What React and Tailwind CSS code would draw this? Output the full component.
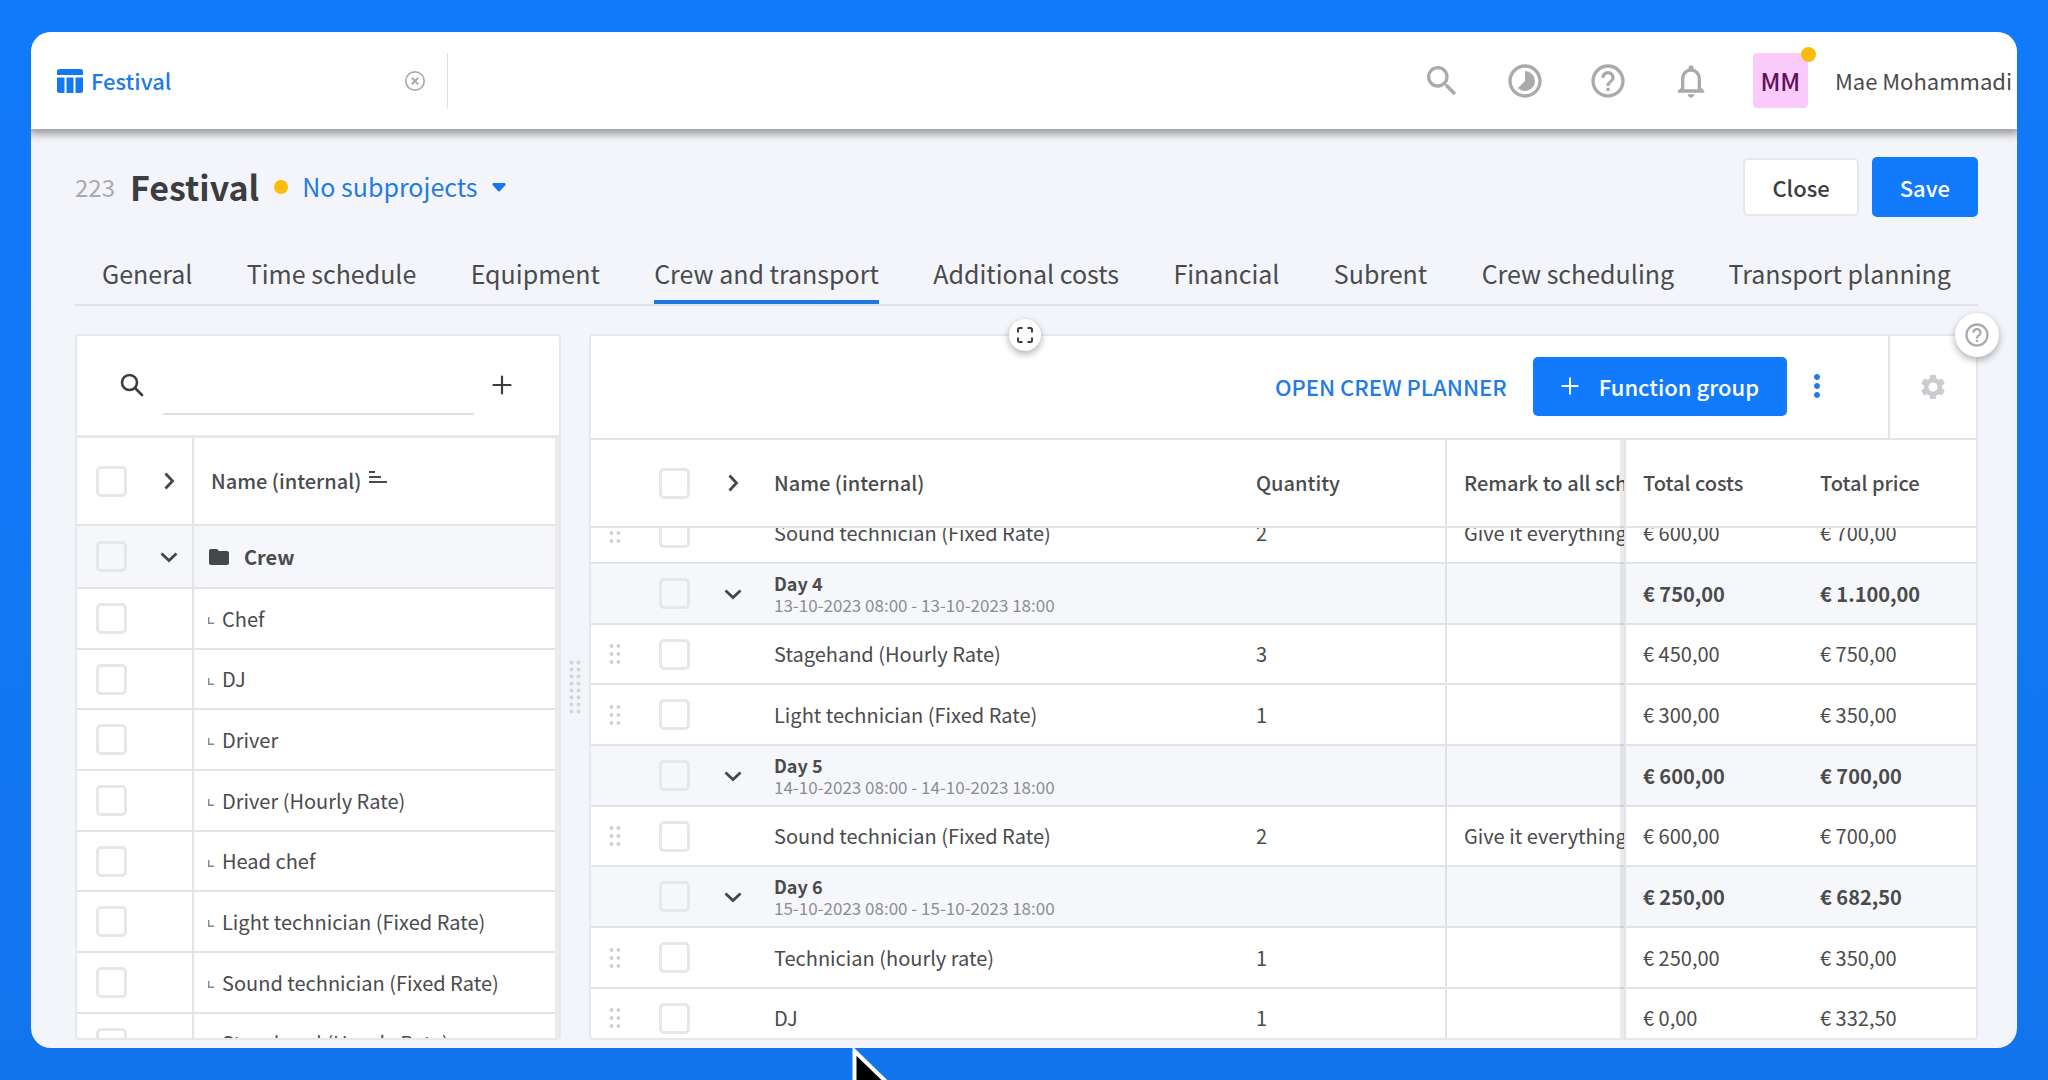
import { useLayoutEffect, useRef } from "react";
import {
  MdSearch,
  MdOutlineTimelapse,
  MdHelpOutline,
  MdNotificationsNone,
  MdSettings,
  MdFolder,
  MdMoreVert,
} from "react-icons/md";

const tabs = [
  "General",
  "Time schedule",
  "Equipment",
  "Crew and transport",
  "Additional costs",
  "Financial",
  "Subrent",
  "Crew scheduling",
  "Transport planning",
];

const functions = [
  "Chef",
  "DJ",
  "Driver",
  "Driver (Hourly Rate)",
  "Head chef",
  "Light technician (Fixed Rate)",
  "Sound technician (Fixed Rate)",
  "Stagehand (Hourly Rate)",
];

const rows = [
  { name: "Sound technician (Fixed Rate)", qty: 2, remark: "Give it everything", costs: "€ 600,00", price: "€ 700,00" },
  { group: true, name: "Day 4", period: "13-10-2023 08:00 - 13-10-2023 18:00", costs: "€ 750,00", price: "€ 1.100,00" },
  { name: "Stagehand (Hourly Rate)", qty: 3, costs: "€ 450,00", price: "€ 750,00" },
  { name: "Light technician (Fixed Rate)", qty: 1, costs: "€ 300,00", price: "€ 350,00" },
  { group: true, name: "Day 5", period: "14-10-2023 08:00 - 14-10-2023 18:00", costs: "€ 600,00", price: "€ 700,00" },
  { name: "Sound technician (Fixed Rate)", qty: 2, remark: "Give it everything", costs: "€ 600,00", price: "€ 700,00" },
  { group: true, name: "Day 6", period: "15-10-2023 08:00 - 15-10-2023 18:00", costs: "€ 250,00", price: "€ 682,50" },
  { name: "Technician (hourly rate)", qty: 1, costs: "€ 250,00", price: "€ 350,00" },
  { name: "DJ", qty: 1, costs: "€ 0,00", price: "€ 332,50" },
];

function Checkbox({ label }) {
  return (
    <input
      type="checkbox"
      aria-label={label}
      className="mx-auto block size-[31px] appearance-none rounded-[5px] border-[3px] border-[#e6e7e9]"
    />
  );
}

function Chevron({ down, label }) {
  return (
    <button type="button" aria-label={label} className="mx-auto block text-[#44484c]">
      <svg viewBox="0 0 24 24" className={down ? "size-6 rotate-90" : "size-6"} fill="none" stroke="currentColor" strokeWidth="2.8">
        <path d="M8.5 4.5 15.5 12 8.5 19.5" />
      </svg>
    </button>
  );
}

function Plus({ className }) {
  return (
    <svg viewBox="0 0 20 20" className={className} fill="none" stroke="currentColor" strokeWidth="2.2" strokeLinecap="round">
      <path d="M10 1.5v17M1.5 10h17" />
    </svg>
  );
}

function Dots({ count, className, step }) {
  return (
    <svg viewBox={`0 0 12 ${count * step}`} className={className} fill="currentColor">
      {Array.from({ length: count }, (_, i) => (
        <g key={i}>
          <circle cx="2.5" cy={step / 2 + i * step} r="2" />
          <circle cx="9.5" cy={step / 2 + i * step} r="2" />
        </g>
      ))}
    </svg>
  );
}

function TopBar() {
  return (
    <header className="relative z-10 flex h-[97px] shrink-0 items-center bg-white pl-[26px] pr-[5px] shadow-[0_3px_8px_2px_rgba(0,0,0,0.38)]">
      <a href="#festival" className="flex items-center gap-2 text-[22px] font-medium text-[#1f7be6]">
        <svg viewBox="0 0 26 24" className="h-6 w-[26px]" fill="#1478f2">
          <path d="M2.5 0h21A2.5 2.5 0 0 1 26 2.500V6H0V2.500A2.500 2.500 0 0 1 2.500 0Z" />
          <path d="M0 8.500h7.500V24H2.500A2.500 2.500 0 0 1 0 21.500Z" />
          <path d="M9.500 8.500h7V24h-7Z" />
          <path d="M18.500 8.500H26v13A2.500 2.500 0 0 1 23.500 24h-5Z" />
        </svg>
        Festival
      </a>
      <button type="button" aria-label="Close tab" className="ml-[233px] text-[#a9abad]">
        <svg viewBox="0 0 22 22" className="size-[22px]" fill="none" stroke="currentColor" strokeWidth="2">
          <circle cx="11" cy="11" r="9.200" strokeWidth="1.700" />
          <path d="m7.800 7.800 6.400 6.400M14.200 7.800l-6.400 6.400" />
        </svg>
      </button>
      <div className="ml-[21px] h-14 w-px bg-[#dfe0e2]" />
      <nav className="ml-auto flex items-center gap-[43px] text-[#a8aaac]">
        <button type="button" aria-label="Search"><MdSearch className="size-10" /></button>
        <button type="button" aria-label="Time"><MdOutlineTimelapse className="size-10" /></button>
        <button type="button" aria-label="Help"><MdHelpOutline className="size-10" /></button>
        <button type="button" aria-label="Notifications"><MdNotificationsNone className="size-10" /></button>
      </nav>
      <div className="relative ml-[42px] flex size-[55px] items-center justify-center rounded bg-[#fbcbfb] text-[24px] font-medium text-[#5f1058]">
        MM
        <span className="absolute -right-2 -top-[6px] size-[15px] rounded-full bg-[#fbbc0c]" />
      </div>
      <span className="ml-[27px] whitespace-nowrap pb-px text-[22px] text-[#4a4b4d]">Mae Mohammadi</span>
    </header>
  );
}

function TitleRow() {
  return (
    <div className="flex h-[60px] items-center">
      <span className="text-[24px] text-[#a8aaac]">223</span>
      <h1 className="ml-[15px] pb-px text-[34px] font-bold text-[#3c3d40]">Festival</h1>
      <span className="ml-[15px] size-[14px] rounded-full bg-[#fbbc0c]" />
      <button type="button" className="ml-[14px] flex items-center gap-[14px] text-[25px] text-[#1f7be6]">
        No subprojects
        <svg viewBox="0 0 14 9" className="h-[9px] w-[14px]" fill="#1478f2">
          <path d="M1.500 0h11Q14.500.500 13 2.500L8.500 7.500Q7 9.500 5.500 7.500L1 2.500Q-.500.500 1.500 0Z" />
        </svg>
      </button>
      <button type="button" className="ml-auto h-[58px] rounded-[5px] border-2 border-[#e6e8ec] bg-white px-[27px] text-[22px] font-medium text-[#3c3d40]">
        Close
      </button>
      <button type="button" className="ml-[13px] h-[60px] rounded-[5px] bg-[#127afd] px-7 text-[22px] font-medium text-white">
        Save
      </button>
    </div>
  );
}

function Tabs() {
  return (
    <nav className="mt-[29px] flex h-[60px] justify-between border-b-2 border-[#e1e3e7] px-[27px]">
      {tabs.map((tab) => (
        <a
          key={tab}
          href="#tab"
          className={
            tab === "Crew and transport"
              ? "flex items-center whitespace-nowrap border-b-4 border-[#1f78dc] pt-px text-[25px] text-[#4a4b4d]"
              : "flex items-center whitespace-nowrap border-b-4 border-transparent pt-px text-[25px] text-[#4a4b4d]"
          }
        >
          {tab}
        </a>
      ))}
    </nav>
  );
}

function FunctionPanel() {
  return (
    <aside className="flex w-[486px] shrink-0 flex-col overflow-hidden rounded border-2 border-[#e6e8ec] bg-white">
      <div className="flex h-[102px] shrink-0 items-center border-b-[3px] border-[#e6e7e9] pb-px pl-[43px] pr-[47px]">
        <label htmlFor="function-search" className="text-[#3c3d40]">
          <svg viewBox="0 0 24 24" className="size-6" fill="none" stroke="currentColor" strokeWidth="2.600" strokeLinecap="round">
            <circle cx="9.500" cy="9.500" r="7.500" />
            <path d="m15 15 7 7" />
          </svg>
        </label>
        <input
          id="function-search"
          type="text"
          className="ml-[19px] mt-3 h-12 min-w-0 flex-1 border-b-2 border-[#dfe0e2] text-[20px] outline-none"
        />
        <button type="button" aria-label="Add" className="ml-[18px] text-[#3c3d40]">
          <Plus className="size-5" />
        </button>
      </div>
      <div className="min-h-0 flex-1 overflow-hidden">
        <table className="w-full table-fixed border-separate border-spacing-0 border-r-4 border-[#ebebed] text-[20px] text-[#4a4b4d]">
          <colgroup>
            <col className="w-[68px]" />
            <col className="w-[49px]" />
            <col />
          </colgroup>
          <thead>
            <tr className="h-[88px] *:border-b-2 *:border-[#e3e4e7]">
              <th><Checkbox label="Select all functions" /></th>
              <th className="border-r-2"><Chevron label="Expand all functions" /></th>
              <th className="pl-[17px] text-left font-medium">
                <span className="flex items-center gap-2">
                  Name (internal)
                  <svg viewBox="0 0 18 14" className="mb-2 h-[14px] w-[18px]" fill="none" stroke="currentColor" strokeWidth="2">
                    <path d="M0 2h6M0 7h12M0 12h18" />
                  </svg>
                </span>
              </th>
            </tr>
          </thead>
          <tbody>
            <tr className="h-[63px] bg-[#f6f7fa] *:border-b-2 *:border-[#e3e4e7]">
              <td><Checkbox label="Select Crew" /></td>
              <td className="border-r-2"><Chevron down label="Collapse Crew" /></td>
              <td className="pl-[13px] font-bold">
                <span className="flex items-center gap-[13px]">
                  <MdFolder className="size-6 text-[#44484c]" />
                  Crew
                </span>
              </td>
            </tr>
            {functions.map((name) => (
              <tr key={name} className="h-[61px] *:border-b-2 *:border-[#e3e4e7] [&:nth-child(3n)]:h-[60px]">
                <td><Checkbox label={`Select ${name}`} /></td>
                <td className="border-r-2" />
                <td className="whitespace-nowrap pl-[14px]">
                  <span className="flex items-center gap-2">
                    <svg viewBox="0 0 6 7" className="mt-1 h-[7px] w-[6px]" fill="none" stroke="#85888b" strokeWidth="1.400">
                      <path d="M.700 0v6.300H6" />
                    </svg>
                    {name}
                  </span>
                </td>
              </tr>
            ))}
          </tbody>
        </table>
      </div>
    </aside>
  );
}

const frozen = "relative border-l-2 border-l-[#d9dadc] pl-[17px] shadow-[-4px_0_0_rgba(0,0,0,0.08)]";

function PlanningTable() {
  const scroller = useRef(null);
  useLayoutEffect(() => {
    scroller.current.scrollTop = 25;
  }, []);

  return (
    <div ref={scroller} className="min-h-0 flex-1 overflow-x-hidden overflow-y-auto [scrollbar-width:none]">
      <table className="w-full table-fixed border-separate border-spacing-0 text-[20px] text-[#4a4b4d]">
        <colgroup>
          <col className="w-[48px]" />
          <col className="w-[70px]" />
          <col className="w-[48px]" />
          <col />
          <col className="w-[209px]" />
          <col className="w-[177px]" />
          <col className="w-[178px]" />
          <col className="w-[174px]" />
        </colgroup>
        <thead className="sticky top-0 z-10 bg-white">
          <tr className="h-[88px] text-left *:border-b-2 *:border-[#e3e4e7] *:font-medium">
            <th />
            <th><Checkbox label="Select all rows" /></th>
            <th><Chevron label="Expand all rows" /></th>
            <th className="pl-[17px]">Name (internal)</th>
            <th className="border-r-2 pl-[18px]">Quantity</th>
            <th className="overflow-hidden whitespace-nowrap pl-[17px]">Remark to all sch</th>
            <th className={frozen}>Total costs</th>
            <th className="pl-[18px]">Total price</th>
          </tr>
        </thead>
        <tbody>
          {rows.map((row, i) => (
            <tr
              key={i}
              className={
                row.group
                  ? "h-[61px] bg-[#f6f7fa] *:border-b-2 *:border-[#e0e2e7] [&:nth-child(3n)]:h-[60px]"
                  : "h-[61px] *:border-b-2 *:border-[#e3e4e7] [&:nth-child(3n)]:h-[60px]"
              }
            >
              <td className="text-[#cfd1d4]">
                {!row.group && <Dots count={3} step={8} className="mx-auto h-6 w-3" />}
              </td>
              <td><Checkbox label={`Select ${row.name}`} /></td>
              <td>{row.group && <Chevron down label={`Collapse ${row.name}`} />}</td>
              <td className="pl-[17px]">
                {row.group ? (
                  <div className="text-[18px] leading-[22px]">
                    <div className="font-bold">{row.name}</div>
                    <div className="text-[17px] text-[#8b8e92]">{row.period}</div>
                  </div>
                ) : (
                  row.name
                )}
              </td>
              <td className="border-r-2 pl-[18px]">{row.qty}</td>
              <td className="overflow-hidden whitespace-nowrap pl-[17px]">{row.remark}</td>
              <td className={row.group ? `${frozen} font-bold` : frozen}>{row.costs}</td>
              <td className={row.group ? "pl-[18px] font-bold" : "pl-[18px]"}>{row.price}</td>
            </tr>
          ))}
        </tbody>
      </table>
    </div>
  );
}

function PlanningPanel() {
  return (
    <section className="relative flex min-w-0 flex-1 flex-col rounded border-2 border-[#e6e8ec] bg-white">
      <div className="flex h-[104px] shrink-0 items-center border-b-2 border-[#e3e4e7]">
        <a href="#planner" className="mb-0.5 ml-auto text-[22px] font-medium text-[#1f7be6]">OPEN CREW PLANNER</a>
        <button type="button" className="mb-0.5 ml-[26px] flex h-[59px] items-center gap-5 rounded-[5px] bg-[#127afd] px-7 text-[22px] font-medium text-white">
          <Plus className="size-[18px]" />
          Function group
        </button>
        <button type="button" aria-label="More options" className="mb-0.5 ml-3 text-[#1f7be6]">
          <MdMoreVert className="size-9" />
        </button>
        <div className="ml-[53px] flex h-full w-[88px] items-center justify-center border-l-2 border-[#e3e4e7] text-[#cbcccf]">
          <button type="button" aria-label="Settings"><MdSettings className="size-[30px]" /></button>
        </div>
      </div>
      <PlanningTable />
      <button
        type="button"
        aria-label="Full screen"
        className="absolute -top-[17px] left-[418px] z-20 flex size-8 items-center justify-center rounded-full bg-white text-[#3c3d40] shadow-[0_3px_6px_1px_rgba(0,0,0,0.25)]"
      >
        <svg viewBox="0 0 16 16" className="size-4" fill="none" stroke="currentColor" strokeWidth="2">
          <path d="M1 5.500V2.500Q1 1 2.500 1H5.500M10.500 1H13.500Q15 1 15 2.500V5.500M15 10.500V13.500Q15 15 13.500 15H10.500M5.500 15H2.500Q1 15 1 13.500V10.500" />
        </svg>
      </button>
      <button
        type="button"
        aria-label="Help for this table"
        className="absolute -right-[23px] -top-[23px] z-20 flex size-11 items-center justify-center rounded-full bg-white text-[#a8aaac] shadow-[0_3px_6px_1px_rgba(0,0,0,0.25)]"
      >
        <MdHelpOutline className="size-7" />
      </button>
    </section>
  );
}

export default function App() {
  return (
    <div className="relative h-screen overflow-hidden bg-linear-to-b from-[#117afa] to-[#1275ee] px-[31px] py-8 font-['Noto_Sans_CJK_SC','Noto_Sans',sans-serif] leading-normal">
      <div className="flex h-full flex-col overflow-hidden rounded-[20px] bg-[#f4f5fa]">
        <TopBar />
        <main className="flex min-h-0 flex-1 flex-col pb-2 pl-11 pr-[39px] pt-7">
          <TitleRow />
          <Tabs />
          <div className="mt-7 flex min-h-0 flex-1">
            <FunctionPanel />
            <div className="flex w-7 shrink-0 items-center justify-center text-[#d3d5d9]">
              <Dots count={8} step={7} className="h-14 w-3" />
            </div>
            <PlanningPanel />
          </div>
        </main>
      </div>
      <svg viewBox="0 0 44 66" className="absolute left-[852px] top-[1046px] h-[66px] w-11" fill="#000" stroke="#fff" strokeWidth="4">
        <path d="M2.500 5v50l12-11 8 18 8-4-8-17h17Z" />
      </svg>
    </div>
  );
}
